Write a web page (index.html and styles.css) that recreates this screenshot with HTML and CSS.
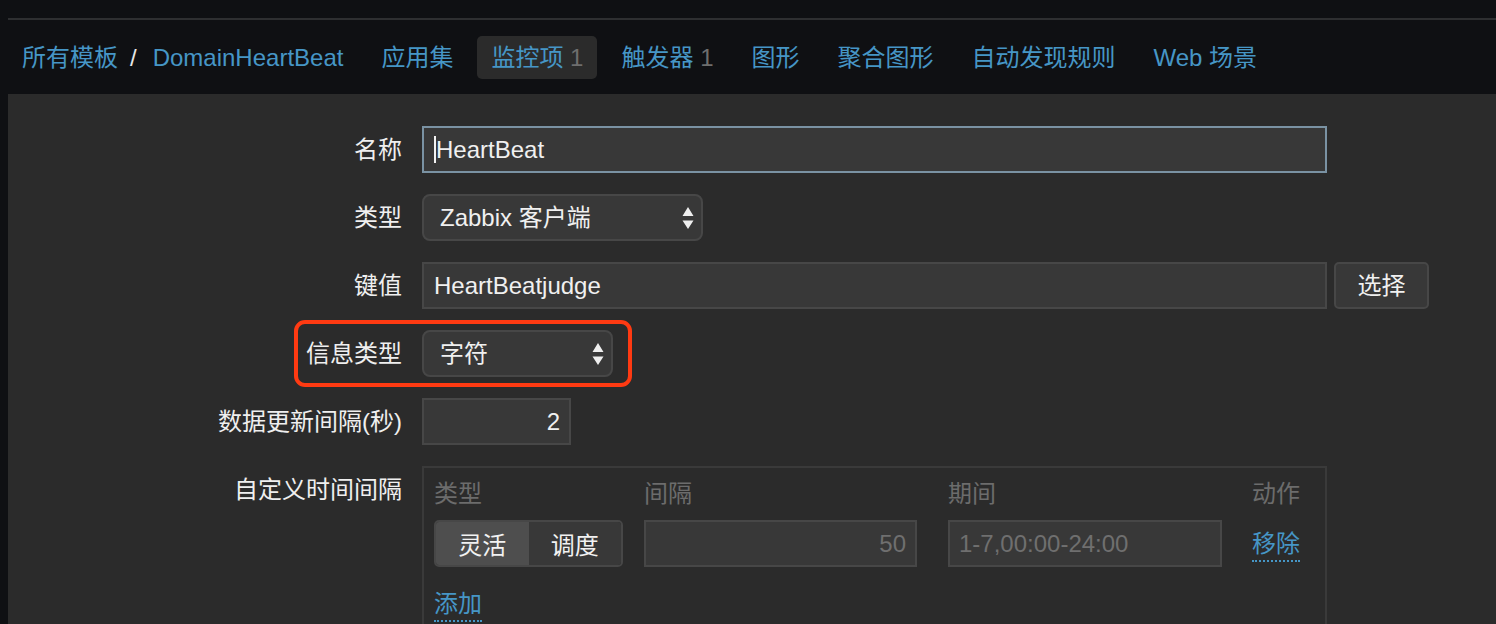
FILE: index.html
```html
<!DOCTYPE html>
<html lang="zh-CN">
<head>
<meta charset="utf-8">
<title>监控项 - DomainHeartBeat</title>
<link rel="stylesheet" href="styles.css">
</head>
<body>
<div class="app">
  <div class="topstrip"></div>
  <nav class="tabs">
    <div class="tab crumb"><span>所有模板</span><span class="slash">/</span><span>DomainHeartBeat</span></div>
    <span class="tab">应用集</span>
    <span class="tab active">监控项 <span class="count">1</span></span>
    <span class="tab">触发器 <span class="count">1</span></span>
    <span class="tab">图形</span>
    <span class="tab">聚合图形</span>
    <span class="tab">自动发现规则</span>
    <span class="tab">Web 场景</span>
  </nav>
  <main class="panel">
    <div class="form">
      <div class="label">名称</div>
      <div class="field">
        <div class="control input focus w-wide"><span class="caret"></span>HeartBeat</div>
      </div>

      <div class="label">类型</div>
      <div class="field">
        <div class="control select w-type"><span>Zabbix 客户端</span>
          <svg class="arrows" width="12" height="22" viewBox="0 0 12 22"><path d="M6 0 L11.5 9 L0.5 9 Z M6 22 L0.5 13.5 L11.5 13.5 Z" fill="#eeeeee"/></svg>
        </div>
      </div>

      <div class="label">键值</div>
      <div class="field">
        <div class="control input w-wide">HeartBeatjudge</div>
        <div class="control btn">选择</div>
      </div>

      <div class="label">信息类型</div>
      <div class="field">
        <div class="control select w-info"><span>字符</span>
          <svg class="arrows" width="12" height="22" viewBox="0 0 12 22"><path d="M6 0 L11.5 9 L0.5 9 Z M6 22 L0.5 13.5 L11.5 13.5 Z" fill="#eeeeee"/></svg>
        </div>
        <div class="highlight"></div>
      </div>

      <div class="label">数据更新间隔(秒)</div>
      <div class="field">
        <div class="control input num w-delay">2</div>
      </div>

      <div class="label">自定义时间间隔</div>
      <div class="field">
        <div class="intervals">
          <div class="iv-grid iv-head">
            <div>类型</div>
            <div>间隔</div>
            <div>期间</div>
            <div>动作</div>
          </div>
          <div class="iv-grid iv-row">
            <div class="seg"><span class="on">灵活</span><span>调度</span></div>
            <div class="control input num dis w-interval">50</div>
            <div class="control input dis w-period">1-7,00:00-24:00</div>
            <div><span class="link">移除</span></div>
          </div>
          <div class="add"><span class="link">添加</span></div>
        </div>
      </div>
    </div>
  </main>
</div>
</body>
</html>
```
FILE: styles.css
```css
html, body {
  margin: 0;
  padding: 0;
}

body {
  background: #0f1013;
  font-family: "Liberation Sans", "Noto Sans CJK SC", sans-serif;
  font-size: 24px;
  color: #eeeeee;
  width: 1496px;
  height: 624px;
  overflow: hidden;
}

.app {
  display: flex;
  flex-direction: column;
  height: 624px;
}

.topstrip {
  flex: none;
  height: 18px;
  margin-left: 8px;
  border-bottom: 2px solid #2e2f31;
}

.tabs {
  flex: none;
  height: 74px;
  margin-left: 8px;
  display: flex;
  align-items: center;
  gap: 10px;
}

.tab {
  height: 43px;
  line-height: 43px;
  padding: 0 14px;
  color: #4696c6;
  border-radius: 5px;
  white-space: nowrap;
}

.tab.active {
  background: #2b2b2b;
}

.count {
  color: #6e6e6e;
}

.slash {
  color: #e6e6e6;
  margin: 0 16px 0 12px;
}

.panel {
  flex: 1;
  margin-left: 8px;
  background: #2b2b2b;
  padding-top: 32px;
  overflow: hidden;
}

.form {
  display: grid;
  grid-template-columns: 394px 1fr;
  column-gap: 20px;
  row-gap: 21px;
  align-items: start;
}

.label {
  line-height: 47px;
  text-align: right;
  color: #efefef;
  white-space: nowrap;
}

.field {
  display: flex;
  gap: 7px;
  position: relative;
}

.control {
  box-sizing: border-box;
  height: 47px;
  background: #383838;
  border: 2px solid #474747;
  display: flex;
  align-items: center;
  color: #f0f0f0;
  white-space: nowrap;
  line-height: 30px;
}

.input {
  padding: 0 10px;
}

.focus {
  border-color: #7a92a3;
}

.caret {
  display: inline-block;
  width: 2px;
  height: 27px;
  background: #f2f2f2;
  margin-left: 0;
  margin-right: 0;
}

.w-wide { width: 905px; }
.w-type { width: 281px; }
.w-info { width: 191px; }
.w-delay { width: 149px; }
.w-interval { width: 273px; }
.w-period { width: 274px; padding-left: 9px; }

.select {
  border-radius: 8px;
  padding: 0 7px 0 16px;
  justify-content: space-between;
}

.arrows {
  display: block;
  flex: none;
}

.btn {
  width: 95px;
  justify-content: center;
  border-radius: 5px;
}

.num {
  justify-content: flex-end;
  padding-right: 9px;
}

.dis {
  color: #6f6f6f;
}

.highlight {
  position: absolute;
  left: -128px;
  top: -10px;
  width: 338px;
  height: 67px;
  box-sizing: border-box;
  border: 4px solid #ff3a12;
  border-radius: 11px;
  pointer-events: none;
}

.intervals {
  box-sizing: border-box;
  width: 905px;
  height: 190px;
  border: 2px solid #3a3a3a;
  border-bottom: none;
  padding: 10px 10px 0;
}

.iv-grid {
  display: grid;
  grid-template-columns: 210px 304px 304px auto;
  align-items: center;
}

.iv-head {
  line-height: 32px;
  color: #6c6c6c;
}

.iv-row {
  margin-top: 10px;
}

.seg {
  display: flex;
  width: 189px;
  height: 47px;
  box-sizing: border-box;
  border: 2px solid #474747;
  border-radius: 5px;
  overflow: hidden;
}

.seg span {
  flex: 1;
  display: flex;
  align-items: center;
  justify-content: center;
  background: #383838;
  color: #f2f2f2;
}

.seg .on {
  background: #4e4e4e;
}

.link {
  display: inline-block;
  line-height: 32px;
  color: #4696c6;
  border-bottom: 2px dotted #4696c6;
}

.iv-row .link {
  margin-top: 3px;
}

.add {
  margin-top: 21px;
}
```
